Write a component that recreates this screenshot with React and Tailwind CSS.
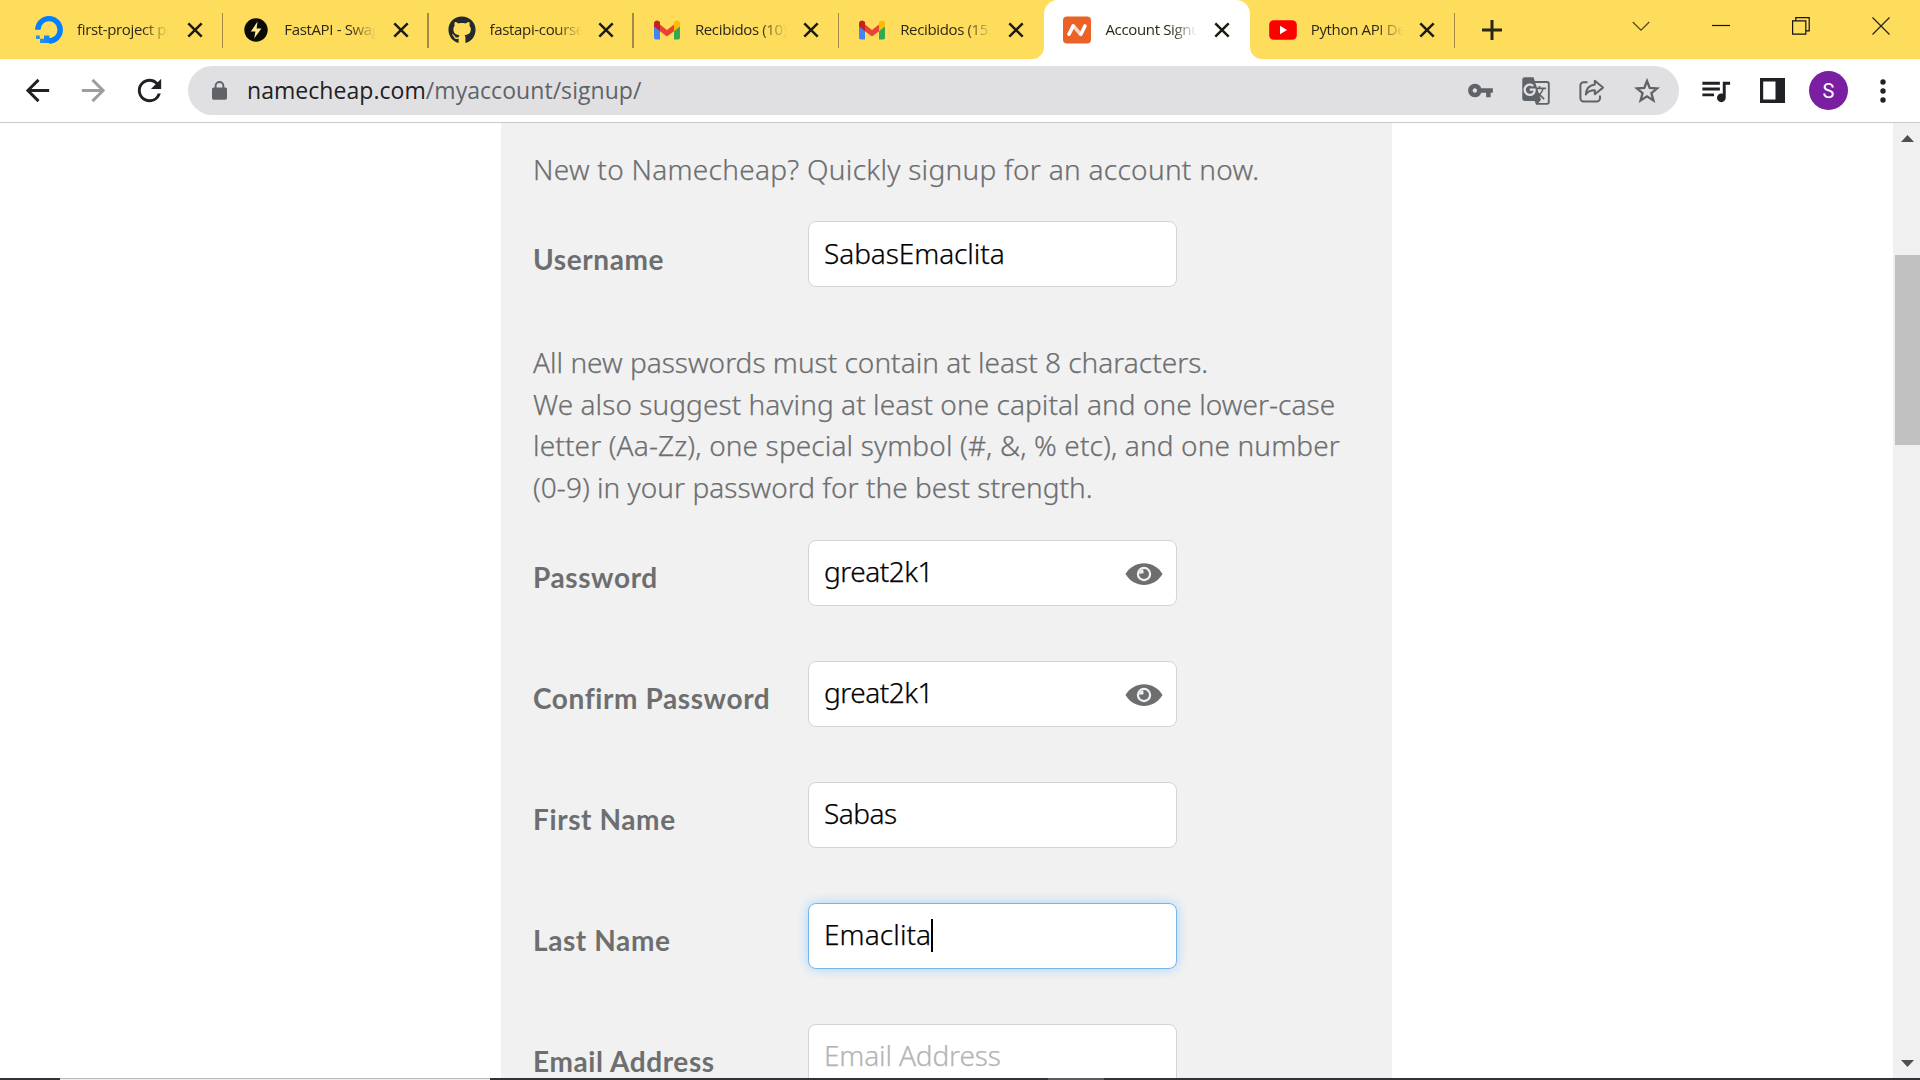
import React from "react";
import { MdArrowBack, MdArrowForward, MdRefresh, MdVpnKey, MdGTranslate, MdQueueMusic } from "react-icons/md";
import { FaGithub } from "react-icons/fa";

const OceanLogo = () => (
  <svg width="28" height="28" viewBox="0 0 28 28">
    <path d="M2.8 14A11.2 11.2 0 1 1 14 25.2" transform="translate(0 -0.2)" fill="none" stroke="#0080ff" strokeWidth="5.4" />
    <path d="M9 19.5h5.4V27H9z" fill="#0080ff" opacity="0.9" />
    <path d="M5 22.8h4.2V27H5zM1 19.4h3.8v3.5H1z" fill="#2a93d8" />
  </svg>
);

const BoltLogo = () => (
  <svg width="28" height="28" viewBox="0 0 28 28">
    <circle cx="14" cy="14" r="11.7" fill="#0b0a05" />
    <path d="M15.6 5.6 8.8 15.4h4.6l-1.2 7 7.2-9.8h-4.8z" fill="#ffe896" />
  </svg>
);

const GmailLogo = () => (
  <svg width="28" height="28" viewBox="0 0 28 28">
    <path d="M1 7.5v14A1.8 1.8 0 0 0 2.8 23.4H7V10z" fill="#4285f4" />
    <path d="M27 7.5v14a1.8 1.8 0 0 1-1.8 1.9H21V10z" fill="#34a853" />
    <path d="M7 8.6 14 14l7-5.4v6.6l-7 5.4-7-5.4z" fill="#ea4335" />
    <path d="M1 7.4C1 4.8 4 3.7 6 5.2l1 .8v9.2l-6-4.6z" fill="#c5221f" />
    <path d="M27 7.4c0-2.6-3-3.7-5-2.2L21 6v9.2l6-4.6z" fill="#fbbc04" />
  </svg>
);

const NamecheapLogo = () => (
  <svg width="28" height="28" viewBox="0 0 28 28">
    <rect x="0" y="0.5" width="28" height="27" rx="4" fill="#ea6226" />
    <g fill="none" strokeWidth="3.6" strokeLinecap="round">
      <path d="m10.4 9.800 7.200 8.600" stroke="#f6d3c3" />
      <path d="M6 18.200 10 10.200M18 18 22 10" stroke="#fff" />
    </g>
  </svg>
);

const YoutubeLogo = () => (
  <svg width="28" height="28" viewBox="0 0 28 28">
    <rect x="0.2" y="4.2" width="27.6" height="19.6" rx="4.5" fill="#f00" />
    <path d="M11 9.8v8.4l7-4.2z" fill="#fff" />
  </svg>
);

const CloseMark = () => (
  <svg width="16" height="16" viewBox="0 0 16 16" fill="none" stroke="#1d1b12" strokeWidth="2.5">
    <path d="m1.3 1.3 13.4 13.4M14.7 1.3 1.3 14.7" />
  </svg>
);

const Eye = () => (
  <svg width="38" height="22" viewBox="0 0 38 22">
    <path d="M0.5 11C9-3.500 29-3.500 37.5 11 29 25.500 9 25.500 0.5 11z" fill="#6d6e70" />
    <circle cx="19" cy="11" r="7.200" fill="#f2f2f2" />
    <circle cx="19" cy="11" r="5" fill="#6d6e70" />
    <path d="M14 10.800A5 5 0 0 1 18.200 6.200L18.600 10.300z" fill="#f2f2f2" />
  </svg>
);

const TABS = [
  { title: "first-project pr", icon: <OceanLogo />, sep: true },
  { title: "FastAPI - Swag", icon: <BoltLogo />, sep: true },
  { title: "fastapi-course", icon: <FaGithub size={28} color="#24292f" />, sep: true },
  { title: "Recibidos (10)", icon: <GmailLogo />, sep: true },
  { title: "Recibidos (15.", icon: <GmailLogo />, sep: false },
  { title: "Account Signu", icon: <NamecheapLogo />, active: true },
  { title: "Python API De", icon: <YoutubeLogo />, sep: true },
];

function Tab({ title, icon, sep, active, first }) {
  return (
    <div className={"relative flex h-[59px] shrink-0 items-center pr-[20px] " + (first ? "w-[206.800px] pl-[18.500px] " : "w-[205.300px] pl-[19px] ") + (active ? "rounded-t-[14px] bg-white" : "")}>
      <span className="w-7 shrink-0">{icon}</span>
      <span className={"ml-[14px] w-[94px] shrink-0 overflow-hidden whitespace-nowrap pb-px font-['Open_Sans'] text-[15px] tracking-[-0.35px] text-[#2c2817] [mask-image:linear-gradient(to_right,black_70%,transparent_98%)]"}>{title}</span>
      <span className="ml-auto">
        <CloseMark />
      </span>
      {sep && <span className="absolute right-0 top-[13px] h-[35px] w-[1.500px] bg-[#a08d43]" />}
      {active && (
        <>
          <svg className="absolute -left-3 bottom-0" width="12" height="12" viewBox="0 0 12 12"><path d="M12 0v12H0A12 12 0 0 0 12 0z" fill="#fff" /></svg>
          <svg className="absolute -right-3 bottom-0" width="12" height="12" viewBox="0 0 12 12"><path d="M0 0v12h12A12 12 0 0 1 0 0z" fill="#fff" /></svg>
        </>
      )}
    </div>
  );
}

function TabStrip() {
  return (
    <header className="flex h-[59px] shrink-0 bg-[#ffdd5c] pl-[16.500px]">
      {TABS.map((t, i) => <Tab key={i} first={i === 0} {...t} />)}
      <div className="ml-[27px] flex items-center">
        <svg width="20" height="20" viewBox="0 0 20 20" stroke="#2a2715" strokeWidth="3"><path d="M10 0v20M0 10h20" /></svg>
      </div>
      <div className="ml-auto flex h-[51px] items-center gap-[62px] pr-[30px]">
        <svg width="18" height="18" viewBox="0 0 18 18" fill="none" stroke="#4d441f" strokeWidth="1.200"><path d="m.8 5 8.200 8.200L17.200 5" /></svg>
        <svg width="18" height="18" viewBox="0 0 18 18" stroke="#111" strokeWidth="1.200"><path d="M0 8.500h18" /></svg>
        <svg width="18" height="18" viewBox="0 0 18 18" fill="none" stroke="#111" strokeWidth="1.200"><path d="M.6 3.800h13.200v13.400H.6zM3.800 3.800V.6h13.400v13.200h-3.400" /></svg>
        <svg width="18" height="18" viewBox="0 0 18 18" stroke="#222" strokeWidth="1.200"><path d="m.5.5 17 17M17.500.5l-17 17" /></svg>
      </div>
    </header>
  );
}

function Toolbar() {
  return (
    <div className="flex h-[64px] shrink-0 items-center border-b border-[#c9c9c9] bg-white">
      <div className="flex items-center gap-[21px] pl-[20px]">
        <MdArrowBack size={35} color="#202124" />
        <MdArrowForward size={35} color="#9b9da0" />
        <MdRefresh size={35} color="#202124" />
      </div>
      <div className="ml-[21px] flex h-[49px] w-[1491px] items-center rounded-full bg-[#e0e0e2] pl-[24px] pr-[19px]">
        <svg width="15" height="19" viewBox="0 0 15 19">
          <path d="M3.600 7.500V4.900a3.900 3.900 0 0 1 7.800 0v2.600" fill="none" stroke="#5f6368" strokeWidth="1.900" />
          <rect x="0" y="6.500" width="15" height="12.200" rx="1.600" fill="#5f6368" />
        </svg>
        <span className="ml-[20px] whitespace-nowrap pb-0.5 font-['Open_Sans'] text-[23px] leading-[32px] tracking-[0.050px] text-[#5f6368]">
          <span className="text-[#202124]">namecheap.com</span>/myaccount/signup/
        </span>
        <div className="ml-auto flex items-center text-[#5f6368]">
          <MdVpnKey size={27} />
          <MdGTranslate size={30} className="ml-[27px]" />
          <svg className="ml-[28px]" width="26" height="24" viewBox="0 0 26 24" fill="none" stroke="currentColor" strokeWidth="2">
            <path d="M8.500 3.200H4.600A3.200 3.200 0 0 0 1.400 6.400v12.800a3.200 3.200 0 0 0 3.200 3.200h13.200a3.200 3.200 0 0 0 3.200-3.200V16.500" />
            <path d="M15.800 1.800 24 8.600l-8.200 6.600v-4c-4.200-.1-7 1.100-9 4.200.4-5.400 3.600-9 9-9.800z" strokeLinejoin="round" />
          </svg>
          <svg className="ml-[29px]" width="26" height="26" viewBox="0 0 26 26" fill="none" stroke="currentColor" strokeWidth="2.300">
            <path d="m13 3 2.700 7 7.500.4-5.800 4.700 2 7.400-6.400-4.200-6.400 4.200 2-7.400-5.800-4.700 7.500-.4z" />
          </svg>
        </div>
      </div>
      <div className="ml-[19px] flex items-center">
        <MdQueueMusic size={35} color="#202124" />
        <svg className="ml-[27px]" width="25" height="25" viewBox="0 0 25 25"><path fillRule="evenodd" d="M0 0h25v25H0zM3.200 3.500v18h12.300v-18z" fill="#202124" /></svg>
        <span className="ml-[24px] flex size-[39px] items-center justify-center rounded-full bg-[#7b1fa2] font-['Roboto'] text-[20px] text-white">S</span>
        <svg className="ml-[32px]" width="6" height="24" viewBox="0 0 6 24" fill="#202124"><circle cx="3" cy="3" r="2.700" /><circle cx="3" cy="12" r="2.700" /><circle cx="3" cy="21" r="2.700" /></svg>
      </div>
    </div>
  );
}

function Field({ label, value, eye, focused, placeholder, text = "" }) {
  return (
    <div className="flex h-[66px] shrink-0">
      <div className="w-[275px] shrink-0 whitespace-nowrap pt-[17.500px] font-['Lato'] text-[28px] font-bold leading-[40px] tracking-[0.600px] text-[#6d6e70]">{label}</div>
      <div className={"flex h-[66px] w-[369px] items-center rounded-lg border bg-white pl-[15px] pr-[13px] " + (focused ? "border-[#79b5ec] shadow-[0_0_12px_#a5d3fb]" : "border-[#d4d4d4]")}>
        <span className={"whitespace-nowrap pb-[3px] leading-[40px] [-webkit-text-stroke:0.250px] " + text + (placeholder ? " text-[#b4b4b4]" : " text-black")}>{value}</span>
        {focused && <span className="h-[33px] w-[2px] bg-black" />}
        {eye && <span className="ml-auto pt-0.5"><Eye /></span>}
      </div>
    </div>
  );
}

function SignupForm() {
  return (
    <main className="h-[955px] w-[891px] shrink-0 overflow-hidden bg-[#f1f1f1] pl-[32px] pt-[25px] font-['Noto_Sans'] text-[28px] font-light text-[#6d6e70]">
      <p className="whitespace-nowrap leading-[42px] tracking-[0.290px] [-webkit-text-stroke:0.250px]">New to Namecheap? Quickly signup for an account now.</p>
      <div className="mt-[31px]"><Field label="Username" value="SabasEmaclita" text="tracking-[-0.080px]" /></div>
      <div className="mb-[31.200px] mt-[54.800px] whitespace-nowrap leading-[41.700px] [-webkit-text-stroke:0.250px]">
        <p className="tracking-[0.010px]">All new passwords must contain at least 8 characters.</p>
        <p className="tracking-[0.060px]">We also suggest having at least one capital and one lower-case</p>
        <p className="tracking-[0.130px]">letter (Aa-Zz), one special symbol (#, &amp;, % etc), and one number</p>
        <p className="tracking-[0.030px]">(0-9) in your password for the best strength.</p>
      </div>
      <div className="flex flex-col gap-[55px]">
        <Field label="Password" value="great2k1" eye text="tracking-[-0.500px]" />
        <Field label="Confirm Password" value="great2k1" eye text="tracking-[-0.500px]" />
        <Field label="First Name" value="Sabas" text="tracking-[-0.500px]" />
        <Field label="Last Name" value="Emaclita" focused text="tracking-[0.100px]" />
        <Field label="Email Address" value="Email Address" placeholder text="tracking-[-0.150px]" />
      </div>
    </main>
  );
}

export default function App() {
  return (
    <div className="flex h-[1080px] w-[1920px] flex-col overflow-hidden bg-white">
      <TabStrip />
      <Toolbar />
      <div className="flex h-[955px] shrink-0">
        <div className="flex flex-1 pl-[501px]">
          <SignupForm />
        </div>
        <div className="flex w-[27px] flex-col items-end bg-[#f0f0f0]">
          <svg className="mr-[6px] mt-[12px]" width="13" height="7" viewBox="0 0 13 7"><path d="M0 7 6.500 0 13 7z" fill="#4f4f4f" /></svg>
          <div className="mt-[113px] h-[190px] w-[25px] bg-[#c1c1c1]" />
          <svg className="mb-[11px] mr-[6px] mt-auto" width="13" height="7" viewBox="0 0 13 7"><path d="M0 0 6.500 7 13 0z" fill="#4f4f4f" /></svg>
        </div>
      </div>
      <div className="flex h-[2px] shrink-0 bg-[#323234]">
        <div className="w-[60px]" />
        <div className="w-[430px] border-t border-[#b8b8b8] bg-[#eee]" />
        <div className="ml-[558px] w-[56px] bg-[#5c5c5e]" />
      </div>
    </div>
  );
}
